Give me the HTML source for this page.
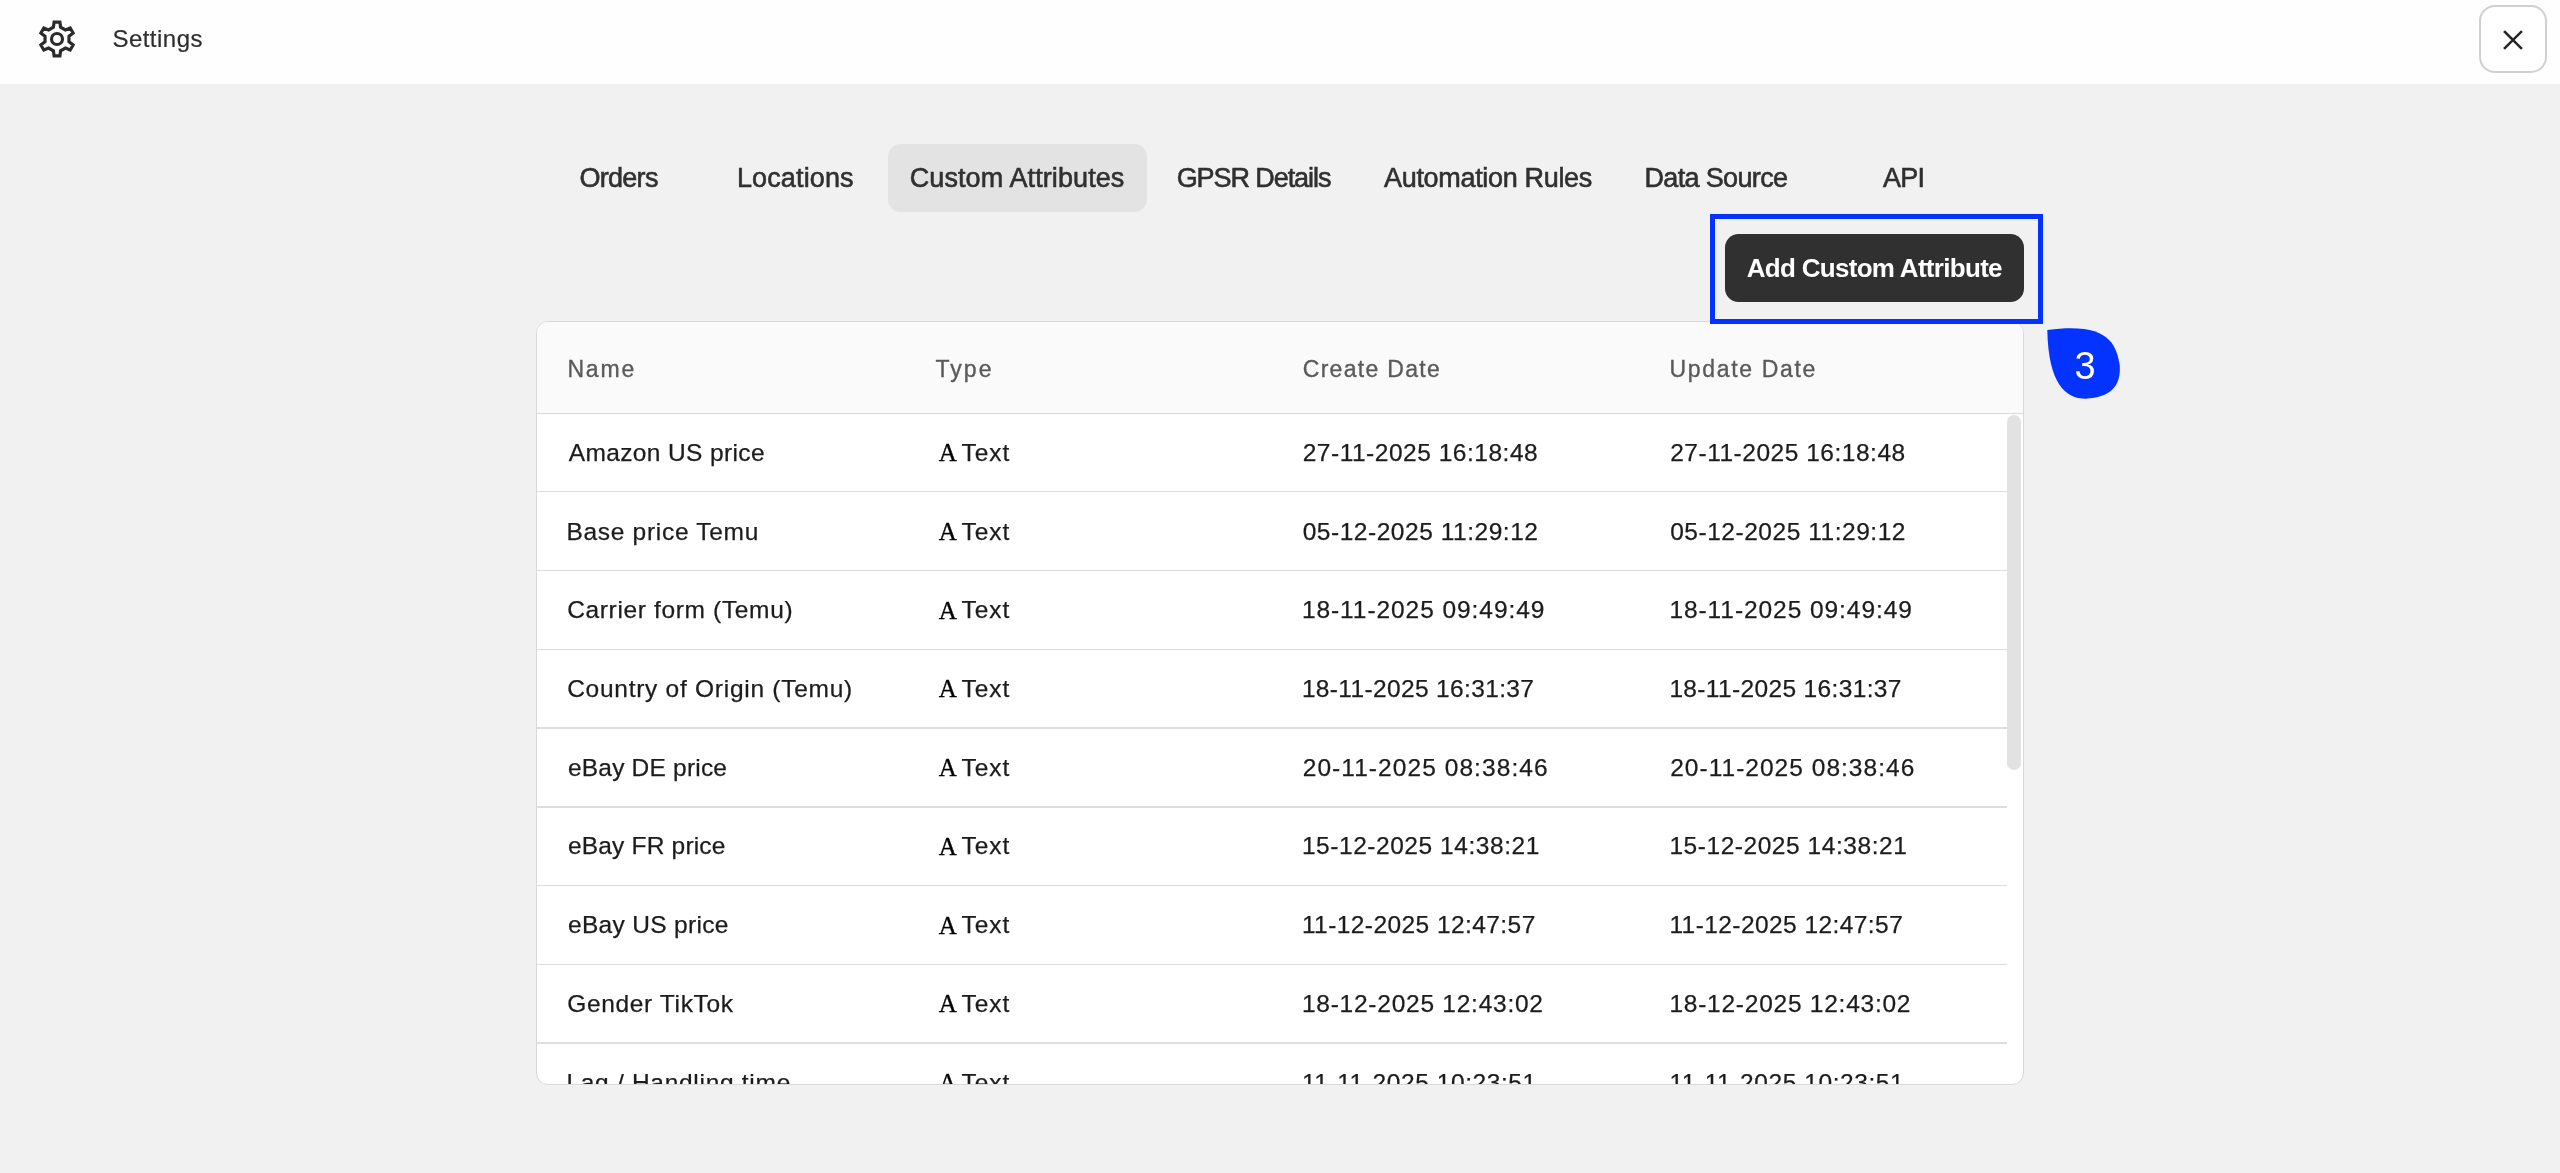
<!DOCTYPE html>
<html><head><meta charset="utf-8"><style>
*{margin:0;padding:0;box-sizing:border-box}
html,body{-webkit-font-smoothing:antialiased;width:2560px;height:1173px;overflow:hidden;background:#f1f1f1;font-family:"Liberation Sans",sans-serif;color:#222}
.hdr{position:absolute;left:0;top:0;width:2560px;height:84px;background:#fefefe}
.t{position:absolute;white-space:nowrap;line-height:1}
.close{position:absolute;left:2479.1px;top:5.3px;width:67.9px;height:68px;border:2px solid #d0d0d0;border-radius:16px;background:#fff}
.active{position:absolute;left:887.9px;top:144.2px;width:259.1px;height:67.7px;border-radius:12.5px;background:#e3e3e3}
.card{position:absolute;left:535.95px;top:320.95px;width:1487.8px;height:764.2px;border:1.5px solid #d9d9d9;border-radius:12px;background:#fff;overflow:hidden}
.thead{position:absolute;left:0;top:0;width:100%;height:91.8px;background:#fafafa;border-bottom:1.5px solid #d9d9d9}
.row{position:absolute;left:0;width:1470.5px;height:1.5px;background:#dedede}
.clip{position:absolute;left:0;top:0;width:2560px;height:1084.1px;overflow:hidden;will-change:transform}

.hd{font-size:24px;font-family:"Liberation Sans",sans-serif;font-weight:normal;color:#2e2e2e;-webkit-text-stroke:0.2px #2e2e2e;}
.tab{font-size:27px;font-family:"Liberation Sans",sans-serif;font-weight:normal;color:#303030;-webkit-text-stroke:0.6px #303030;}
.btn{font-size:26px;font-family:"Liberation Sans",sans-serif;font-weight:bold;color:#ffffff;}
.bdg{font-size:38px;font-family:"Liberation Sans",sans-serif;font-weight:normal;color:#ffffff;}
.th{font-size:23px;font-family:"Liberation Sans",sans-serif;font-weight:normal;color:#5a5a5a;-webkit-text-stroke:0.35px #5a5a5a;}
.td{font-size:24.5px;font-family:"Liberation Sans",sans-serif;font-weight:normal;color:#1c1c1c;-webkit-text-stroke:0.25px #1c1c1c;}
.ic{font-size:25px;font-family:"Liberation Serif",serif;font-weight:normal;color:#000000;-webkit-text-stroke:0.35px #000000;}
</style></head><body>
<div class="hdr"></div>
<svg style="position:absolute;left:37px;top:19.3px" width="40" height="40" viewBox="-20 -20 40 40"><polygon points="-3.60,-11.76 -2.90,-16.90 2.90,-16.90 3.60,-11.76 8.39,-9.00 13.19,-10.96 16.09,-5.94 11.98,-2.77 11.98,2.77 16.09,5.94 13.19,10.96 8.39,9.00 3.60,11.76 2.90,16.90 -2.90,16.90 -3.60,11.76 -8.39,9.00 -13.19,10.96 -16.09,5.94 -11.98,2.77 -11.98,-2.77 -16.09,-5.94 -13.19,-10.96 -8.39,-9.00" fill="none" stroke="#2b2b2b" stroke-width="3.2" stroke-linejoin="miter"/><circle cx="0" cy="0" r="5.5" fill="none" stroke="#2b2b2b" stroke-width="3.2"/></svg>
<div class="close"><svg style="position:absolute;left:22px;top:23px" width="20" height="20" viewBox="0 0 20 20"><path d="M1.9 1.9L18.1 18.1M18.1 1.9L1.9 18.1" stroke="#262626" stroke-width="2.5" stroke-linecap="square"/></svg></div>
<div class="active"></div>
<div style="position:absolute;left:1725px;top:234px;width:299px;height:68px;border-radius:13.5px;background:#303030"></div>
<div class="card"><div class="thead"></div>
<div class="row" style="top:169.06px"></div>
<div class="row" style="top:247.82px"></div>
<div class="row" style="top:326.58px"></div>
<div class="row" style="top:405.34px"></div>
<div class="row" style="top:484.10px"></div>
<div class="row" style="top:562.86px"></div>
<div class="row" style="top:641.62px"></div>
<div class="row" style="top:720.38px"></div>
<div style="position:absolute;left:1470.2px;top:92.6px;width:13.6px;height:355px;border-radius:6.8px;background:#e2e2e2"></div>
</div>
<div style="position:absolute;left:1710px;top:214px;width:333px;height:109.8px;border:5px solid #0433ff"></div>
<svg style="position:absolute;left:0;top:0" width="2560" height="1173"><path d="M2047.29,329.98 C2107.36,322.17 2116.17,342.60 2119.82,366.05 C2121.01,392.38 2103.17,397.49 2086.05,398.66 C2065.17,398.76 2048.34,383.40 2047.29,329.98Z" fill="#0433ff"/></svg>
<div class="clip">
<div id="settings" class="t hd" style="left:112.40px;top:27.38px;letter-spacing:0.480px">Settings</div>
<div id="tab0" class="t tab" style="left:579.42px;top:164.74px;letter-spacing:-0.704px">Orders</div>
<div id="tab1" class="t tab" style="left:736.90px;top:164.74px;letter-spacing:0.140px">Locations</div>
<div id="tab2" class="t tab" style="left:909.70px;top:164.74px;letter-spacing:0.100px">Custom Attributes</div>
<div id="tab3" class="t tab" style="left:1176.70px;top:164.74px;letter-spacing:-1.076px">GPSR Details</div>
<div id="tab4" class="t tab" style="left:1384.00px;top:164.74px;letter-spacing:-0.320px">Automation Rules</div>
<div id="tab5" class="t tab" style="left:1644.40px;top:164.74px;letter-spacing:-0.640px">Data Source</div>
<div id="tab6" class="t tab" style="left:1883.00px;top:164.74px;letter-spacing:-0.800px">API</div>
<div id="btn" class="t btn" style="left:1746.72px;top:254.79px;letter-spacing:-0.699px">Add Custom Attribute</div>
<div id="badge" class="t bdg" style="left:2074.40px;top:346.83px">3</div>
<div id="th0" class="t th" style="left:567.40px;top:358.13px;letter-spacing:1.867px">Name</div>
<div id="th1" class="t th" style="left:935.50px;top:358.13px;letter-spacing:2.027px">Type</div>
<div id="th2" class="t th" style="left:1302.72px;top:358.13px;letter-spacing:1.312px">Create Date</div>
<div id="th3" class="t th" style="left:1669.44px;top:358.13px;letter-spacing:1.680px">Update Date</div>
<div id="n0" class="t td" style="left:568.78px;top:440.86px;letter-spacing:0.366px">Amazon US price</div>
<div id="a0" class="t ic" style="left:938.76px;top:440.24px">A</div>
<div id="x0" class="t td" style="left:961.48px;top:440.86px;letter-spacing:0.960px">Text</div>
<div id="c0" class="t td" style="left:1302.70px;top:440.86px;letter-spacing:0.516px">27-11-2025 16:18:48</div>
<div id="u0" class="t td" style="left:1670.20px;top:440.86px;letter-spacing:0.516px">27-11-2025 16:18:48</div>
<div id="n1" class="t td" style="left:566.38px;top:519.58px;letter-spacing:0.709px">Base price Temu</div>
<div id="a1" class="t ic" style="left:938.76px;top:518.96px">A</div>
<div id="x1" class="t td" style="left:961.48px;top:519.58px;letter-spacing:0.960px">Text</div>
<div id="c1" class="t td" style="left:1302.70px;top:519.58px;letter-spacing:0.533px">05-12-2025 11:29:12</div>
<div id="u1" class="t td" style="left:1670.20px;top:519.58px;letter-spacing:0.533px">05-12-2025 11:29:12</div>
<div id="n2" class="t td" style="left:567.18px;top:598.30px;letter-spacing:0.649px">Carrier form (Temu)</div>
<div id="a2" class="t ic" style="left:938.76px;top:597.68px">A</div>
<div id="x2" class="t td" style="left:961.48px;top:598.30px;letter-spacing:0.960px">Text</div>
<div id="c2" class="t td" style="left:1301.90px;top:598.30px;letter-spacing:0.933px">18-11-2025 09:49:49</div>
<div id="u2" class="t td" style="left:1669.40px;top:598.30px;letter-spacing:0.933px">18-11-2025 09:49:49</div>
<div id="n3" class="t td" style="left:567.18px;top:677.02px;letter-spacing:0.730px">Country of Origin (Temu)</div>
<div id="a3" class="t ic" style="left:938.76px;top:676.40px">A</div>
<div id="x3" class="t td" style="left:961.48px;top:677.02px;letter-spacing:0.960px">Text</div>
<div id="c3" class="t td" style="left:1301.90px;top:677.02px;letter-spacing:0.356px">18-11-2025 16:31:37</div>
<div id="u3" class="t td" style="left:1669.40px;top:677.02px;letter-spacing:0.356px">18-11-2025 16:31:37</div>
<div id="n4" class="t td" style="left:567.98px;top:755.74px;letter-spacing:0.200px">eBay DE price</div>
<div id="a4" class="t ic" style="left:938.76px;top:755.12px">A</div>
<div id="x4" class="t td" style="left:961.48px;top:755.74px;letter-spacing:0.960px">Text</div>
<div id="c4" class="t td" style="left:1302.70px;top:755.74px;letter-spacing:1.067px">20-11-2025 08:38:46</div>
<div id="u4" class="t td" style="left:1670.20px;top:755.74px;letter-spacing:1.022px">20-11-2025 08:38:46</div>
<div id="n5" class="t td" style="left:567.98px;top:834.46px;letter-spacing:0.187px">eBay FR price</div>
<div id="a5" class="t ic" style="left:938.76px;top:833.84px">A</div>
<div id="x5" class="t td" style="left:961.48px;top:834.46px;letter-spacing:0.960px">Text</div>
<div id="c5" class="t td" style="left:1301.90px;top:834.46px;letter-spacing:0.551px">15-12-2025 14:38:21</div>
<div id="u5" class="t td" style="left:1669.40px;top:834.46px;letter-spacing:0.551px">15-12-2025 14:38:21</div>
<div id="n6" class="t td" style="left:567.98px;top:913.18px;letter-spacing:0.320px">eBay US price</div>
<div id="a6" class="t ic" style="left:938.76px;top:912.56px">A</div>
<div id="x6" class="t td" style="left:961.48px;top:913.18px;letter-spacing:0.960px">Text</div>
<div id="c6" class="t td" style="left:1301.90px;top:913.18px;letter-spacing:0.427px">11-12-2025 12:47:57</div>
<div id="u6" class="t td" style="left:1669.40px;top:913.18px;letter-spacing:0.427px">11-12-2025 12:47:57</div>
<div id="n7" class="t td" style="left:567.18px;top:991.90px;letter-spacing:0.653px">Gender TikTok</div>
<div id="a7" class="t ic" style="left:938.76px;top:991.28px">A</div>
<div id="x7" class="t td" style="left:961.48px;top:991.90px;letter-spacing:0.960px">Text</div>
<div id="c7" class="t td" style="left:1301.90px;top:991.90px;letter-spacing:0.756px">18-12-2025 12:43:02</div>
<div id="u7" class="t td" style="left:1669.40px;top:991.90px;letter-spacing:0.756px">18-12-2025 12:43:02</div>
<div id="n8" class="t td" style="left:566.38px;top:1070.62px;letter-spacing:0.711px">Lag / Handling time</div>
<div id="a8" class="t ic" style="left:938.76px;top:1070.00px">A</div>
<div id="x8" class="t td" style="left:961.48px;top:1070.62px;letter-spacing:0.960px">Text</div>
<div id="c8" class="t td" style="left:1301.90px;top:1070.62px;letter-spacing:0.578px">11-11-2025 10:23:51</div>
<div id="u8" class="t td" style="left:1669.40px;top:1070.62px;letter-spacing:0.578px">11-11-2025 10:23:51</div>
</div>
</body></html>
